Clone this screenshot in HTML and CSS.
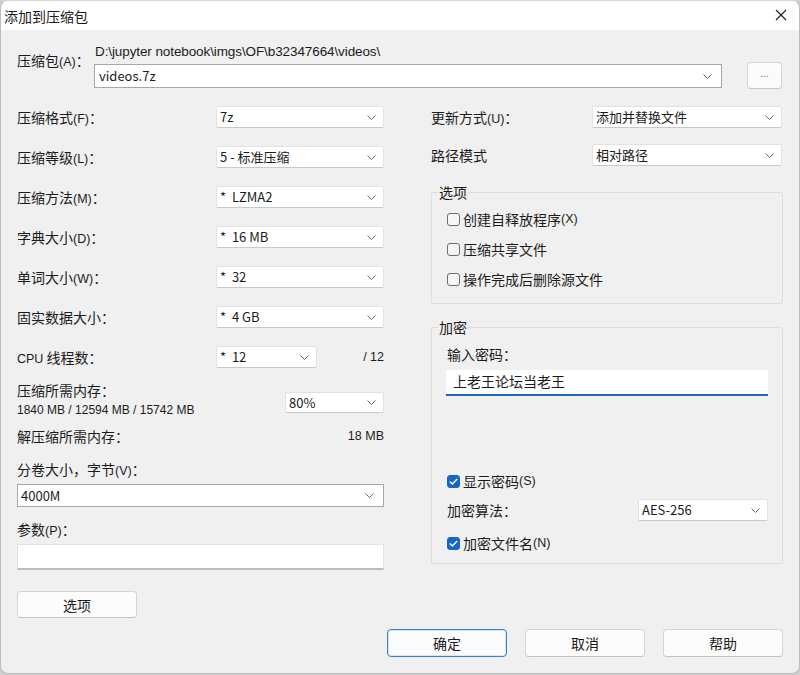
FILE: index.html
```html
<!DOCTYPE html>
<html lang="zh-CN">
<head>
<meta charset="utf-8">
<title>添加到压缩包</title>
<link rel="stylesheet" href="styles.css">
</head>
<body>
<div class="window">
  <header class="titlebar">
    <span class="title">添加到压缩包</span>
    <svg class="close" width="12" height="12" viewBox="0 0 12 12"><path d="M1 1L11 11M11 1L1 11" stroke="#1e1e1e" stroke-width="1.1" fill="none"/></svg>
  </header>
  <main class="content">
    <div class="archive">
      <div class="archive-label">压缩包<span class="k">(A)</span>：</div>
      <div class="archive-path">
        <div class="path">D:\jupyter notebook\imgs\OF\b32347664\videos\</div>
        <div class="combo edit"><span class="val">videos.7z</span><svg class="chev" width="9" height="5" viewBox="0 0 9 5"><path d="M0.5 0.5L4.5 4.5L8.5 0.5" stroke="#666" fill="none"/></svg></div>
      </div>
      <button class="browse">...</button>
    </div>

    <div class="columns">
      <div class="left">
        <div class="row"><span class="lbl">压缩格式<span class="k">(F)</span>：</span><div class="combo"><span class="val">7z</span><svg class="chev" width="9" height="5" viewBox="0 0 9 5"><path d="M0.5 0.5L4.5 4.5L8.5 0.5" stroke="#666" fill="none"/></svg></div></div>
        <div class="row"><span class="lbl">压缩等级<span class="k">(L)</span>：</span><div class="combo"><span class="val">5 - 标准压缩</span><svg class="chev" width="9" height="5" viewBox="0 0 9 5"><path d="M0.5 0.5L4.5 4.5L8.5 0.5" stroke="#666" fill="none"/></svg></div></div>
        <div class="row"><span class="lbl">压缩方法<span class="k">(M)</span>：</span><div class="combo"><span class="val">*&nbsp; LZMA2</span><svg class="chev" width="9" height="5" viewBox="0 0 9 5"><path d="M0.5 0.5L4.5 4.5L8.5 0.5" stroke="#666" fill="none"/></svg></div></div>
        <div class="row"><span class="lbl">字典大小<span class="k">(D)</span>：</span><div class="combo"><span class="val">*&nbsp; 16 MB</span><svg class="chev" width="9" height="5" viewBox="0 0 9 5"><path d="M0.5 0.5L4.5 4.5L8.5 0.5" stroke="#666" fill="none"/></svg></div></div>
        <div class="row"><span class="lbl">单词大小<span class="k">(W)</span>：</span><div class="combo"><span class="val">*&nbsp; 32</span><svg class="chev" width="9" height="5" viewBox="0 0 9 5"><path d="M0.5 0.5L4.5 4.5L8.5 0.5" stroke="#666" fill="none"/></svg></div></div>
        <div class="row"><span class="lbl">固实数据大小：</span><div class="combo"><span class="val">*&nbsp; 4 GB</span><svg class="chev" width="9" height="5" viewBox="0 0 9 5"><path d="M0.5 0.5L4.5 4.5L8.5 0.5" stroke="#666" fill="none"/></svg></div></div>
        <div class="row"><span class="lbl"><span class="k">CPU</span> 线程数：</span><div class="combo cpu"><span class="val">*&nbsp; 12</span><svg class="chev" width="9" height="5" viewBox="0 0 9 5"><path d="M0.5 0.5L4.5 4.5L8.5 0.5" stroke="#666" fill="none"/></svg></div><span class="spacer"></span><span class="num">/ 12</span></div>

        <div class="mem">
          <div class="mem-text">
            <div class="line">压缩所需内存：</div>
            <div class="line num small">1840 MB / 12594 MB / 15742 MB</div>
          </div>
          <div class="combo pct"><span class="val">80%</span><svg class="chev" width="9" height="5" viewBox="0 0 9 5"><path d="M0.5 0.5L4.5 4.5L8.5 0.5" stroke="#666" fill="none"/></svg></div>
        </div>
        <div class="decomp"><span>解压缩所需内存：</span><span class="num">18 MB</span></div>

        <div class="field-label">分卷大小，字节<span class="k">(V)</span>：</div>
        <div class="combo edit vol"><span class="val">4000M</span><svg class="chev" width="9" height="5" viewBox="0 0 9 5"><path d="M0.5 0.5L4.5 4.5L8.5 0.5" stroke="#666" fill="none"/></svg></div>

        <div class="field-label">参数<span class="k">(P)</span>：</div>
        <div class="textbox"></div>

        <button class="btn options">选项</button>
      </div>

      <div class="right">
        <div class="row r1"><span class="lbl-r">更新方式<span class="k">(U)</span>：</span><div class="combo rcombo"><span class="val">添加并替换文件</span><svg class="chev" width="9" height="5" viewBox="0 0 9 5"><path d="M0.5 0.5L4.5 4.5L8.5 0.5" stroke="#666" fill="none"/></svg></div></div>
        <div class="row r2"><span class="lbl-r">路径模式</span><div class="combo rcombo"><span class="val">相对路径</span><svg class="chev" width="9" height="5" viewBox="0 0 9 5"><path d="M0.5 0.5L4.5 4.5L8.5 0.5" stroke="#666" fill="none"/></svg></div></div>

        <fieldset class="group opts">
          <legend>选项</legend>
          <div class="group-body">
            <div class="check-row"><span class="cb"></span>创建自释放程序<span class="k">(X)</span></div>
            <div class="check-row"><span class="cb"></span>压缩共享文件</div>
            <div class="check-row"><span class="cb"></span>操作完成后删除源文件</div>
          </div>
        </fieldset>

        <fieldset class="group enc">
          <legend>加密</legend>
          <div class="group-body enc-body">
            <div class="pw-label">输入密码：</div>
            <div class="pwbox">上老王论坛当老王</div>
            <div class="check-row show"><span class="cb on"><svg width="9" height="7" viewBox="0 0 9 7"><path d="M0.8 3.6L3.3 6L8.2 0.9" stroke="#fff" stroke-width="1.4" fill="none"/></svg></span>显示密码<span class="k">(S)</span></div>
            <div class="algo"><span>加密算法：</span><div class="combo acombo"><span class="val">AES-256</span><svg class="chev" width="9" height="5" viewBox="0 0 9 5"><path d="M0.5 0.5L4.5 4.5L8.5 0.5" stroke="#666" fill="none"/></svg></div></div>
            <div class="check-row names"><span class="cb on"><svg width="9" height="7" viewBox="0 0 9 7"><path d="M0.8 3.6L3.3 6L8.2 0.9" stroke="#fff" stroke-width="1.4" fill="none"/></svg></span>加密文件名<span class="k">(N)</span></div>
          </div>
        </fieldset>
      </div>
    </div>

    <div class="footer">
      <button class="btn default">确定</button>
      <button class="btn">取消</button>
      <button class="btn">帮助</button>
    </div>
  </main>
</div>
</body>
</html>
```

FILE: styles.css
```css
html, body {
  margin: 0;
  padding: 0;
  background: #cfcfcf;
}

body {
  font-family: "Noto Sans CJK SC", "Liberation Sans", sans-serif;
  font-size: 14px;
  color: #1b1b1b;
}

.window {
  width: 800px;
  height: 674px;
  box-sizing: border-box;
  border: 1px solid #bcbcbc;
  border-top-color: #d6d6d6;
  border-radius: 8px;
  background: #f0f0f0;
  overflow: hidden;
}

.titlebar {
  height: 29px;
  background: #ffffff;
  display: flex;
  align-items: center;
  justify-content: space-between;
  padding: 0 12px 0 3px;
}

.title {
  font-size: 14px;
  line-height: 18px;
}

.close {
  display: block;
  margin-top: -1px;
}

.content {
  padding: 0 16px;
}

.k {
  font-family: "Liberation Sans", sans-serif;
  font-size: 12.5px;
  line-height: 1;
}

.num {
  font-family: "Liberation Sans", sans-serif;
  font-size: 12.5px;
}

.num.small {
  font-size: 12px;
}

/* archive row */
.archive {
  display: flex;
  align-items: flex-start;
  margin-top: 14px;
}

.archive-label {
  width: 77px;
  padding-top: 7px;
  line-height: 18px;
}

.archive-path {
  width: 628px;
}

.path {
  font-family: "Liberation Sans", sans-serif;
  font-size: 13.5px;
  line-height: 16px;
  padding-left: 1px;
  letter-spacing: -0.1px;
}

.browse {
  width: 35px;
  height: 27px;
  margin: 18px 0 0 25px;
  padding: 0 0 4px;
  border: 1px solid #d6d6d6;
  border-bottom-color: #c6c6c6;
  border-radius: 4px;
  background: #fbfbfb;
  color: #6a6a6a;
  font-size: 10px;
  font-family: "Liberation Sans", sans-serif;
}

/* combo boxes */
.combo {
  box-sizing: border-box;
  height: 22px;
  width: 168px;
  background: #ffffff;
  border: 1px solid #e1e1e1;
  border-bottom-color: #c9c9c9;
  border-radius: 2px;
  display: flex;
  align-items: center;
  justify-content: space-between;
  padding: 0 7px 0 3px;
  font-size: 13px;
}

.combo .val {
  line-height: 18px;
  white-space: pre;
}

.combo .chev {
  display: block;
  flex: none;
}

.combo.edit {
  width: 100%;
  border: 1px solid #a8a8a8;
  border-radius: 0;
  height: 24px;
  margin-top: 4px;
  padding: 0 9px 0 4px;
}

.combo.vol {
  height: 23px;
  margin-top: 5px;
  padding-left: 3px;
}

.combo.cpu {
  width: 101px;
}

.combo.pct {
  width: 99px;
  height: 21px;
  margin-top: 15px;
}

.rcombo {
  width: 190px;
}

.acombo {
  width: 130px;
}

/* columns */
.columns {
  display: grid;
  grid-template-columns: 367px 352px;
  column-gap: 47px;
  margin-top: 8px;
}

.left, .right {
  display: flex;
  flex-direction: column;
}

.row {
  display: flex;
  align-items: center;
  height: 40px;
}

.lbl {
  width: 199px;
  line-height: 18px;
}

.spacer {
  flex: 1;
}

.mem {
  display: flex;
  justify-content: space-between;
  align-items: flex-start;
  height: 48px;
}

.mem-text {
  padding-top: 3px;
}

.mem-text .line {
  line-height: 20px;
}

.decomp {
  display: flex;
  justify-content: space-between;
  align-items: center;
  height: 22px;
}

.field-label {
  margin-top: 12px;
  line-height: 20px;
  height: 20px;
}

.textbox {
  box-sizing: border-box;
  height: 26px;
  margin-top: 5px;
  background: #ffffff;
  border: 1px solid #e3e3e3;
  border-bottom: 2px solid #bcbcbc;
}

.btn {
  box-sizing: border-box;
  width: 120px;
  height: 28px;
  border: 1px solid #d4d4d4;
  border-bottom-color: #c3c3c3;
  border-radius: 4px;
  background: #fcfcfc;
  font-family: "Noto Sans CJK SC", sans-serif;
  font-size: 14px;
  color: #1b1b1b;
  padding: 0;
}

.btn.options {
  height: 27px;
  margin-top: 21px;
}

.btn.default {
  border: 1px solid #3b7fc9;
  box-shadow: inset 0 0 0 1px #d7e6f5;
}

/* right column */
.lbl-r {
  width: 161px;
  line-height: 18px;
}

.r2 {
  height: 36px;
}

.group {
  margin: 0;
  padding: 0;
  border: 1px solid #dddddd;
  border-radius: 2px;
  min-width: 0;
}

.group legend {
  margin-left: 6px;
  padding: 0 1px;
  line-height: 18px;
}

.opts {
  margin-top: 10px;
}

.group-body {
  padding: 3px 14px 9px 15px;
}

.check-row {
  display: flex;
  align-items: center;
  height: 30px;
  line-height: 18px;
}

.cb {
  box-sizing: border-box;
  width: 13px;
  height: 13px;
  border: 1px solid #6d6d6d;
  border-radius: 3px;
  background: #f6f6f6;
  margin-right: 3px;
  display: flex;
  align-items: center;
  justify-content: center;
  flex: none;
}

.cb.on {
  background: #1766c3;
  border-color: #1766c3;
}

.cb svg {
  display: block;
}

.enc {
  margin-top: 14px;
}

.enc-body {
  padding: 8px 14px 4px 15px;
}

.pw-label {
  line-height: 20px;
}

.pwbox {
  box-sizing: border-box;
  height: 26px;
  margin: 6px 0 0 -1px;
  background: #ffffff;
  border-bottom: 2px solid #1a68b8;
  padding-left: 7px;
  line-height: 22px;
  font-size: 14px;
}

.check-row.show {
  height: 24px;
  margin-top: 73px;
}

.algo {
  display: flex;
  justify-content: space-between;
  align-items: center;
  height: 34px;
}

.check-row.names {
  height: 32px;
}

.footer {
  display: flex;
  justify-content: flex-end;
  gap: 18px;
  margin-top: 11px;
}
```
